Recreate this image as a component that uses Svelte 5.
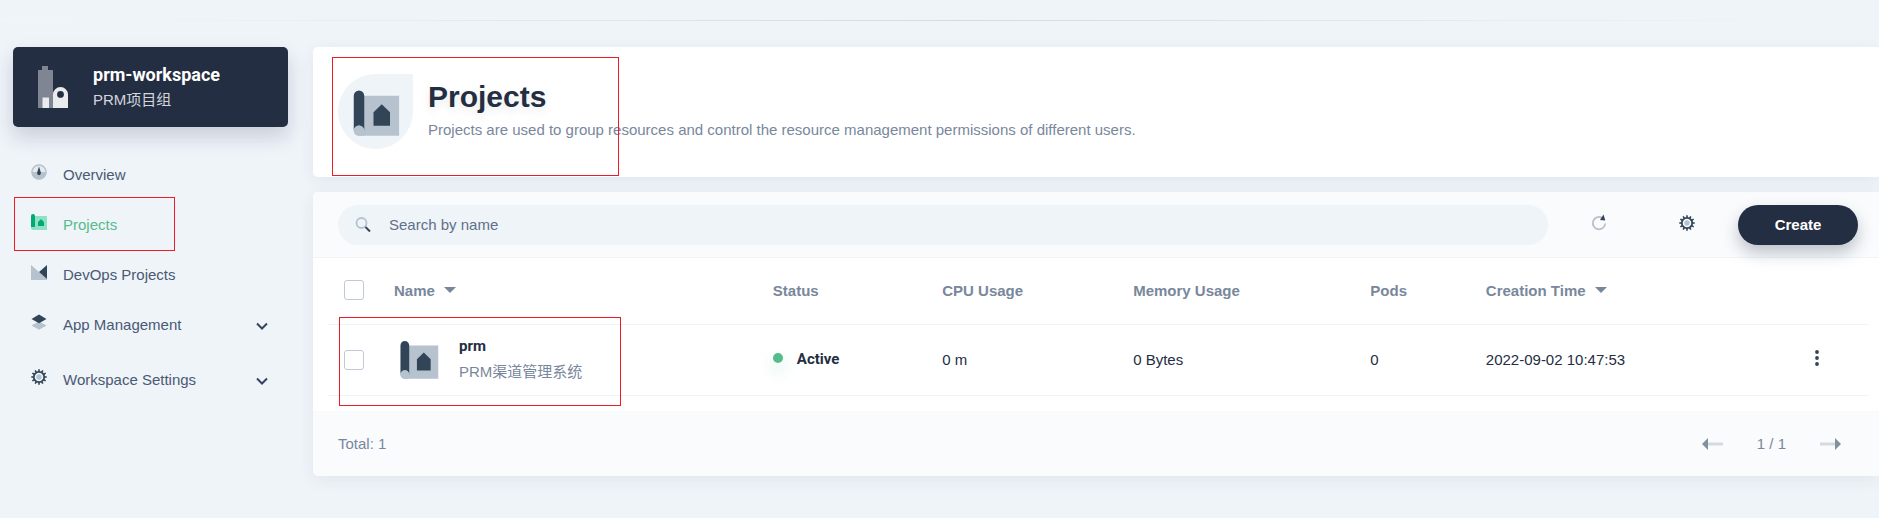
<script>
  const nav = [
    { icon: 'gauge', label: 'Overview' },
    { icon: 'project', label: 'Projects', active: true },
    { icon: 'devops', label: 'DevOps Projects' },
    { icon: 'layers', label: 'App Management', group: true },
    { icon: 'gear', label: 'Workspace Settings', group: true }
  ];
  const columns = [
    { key: 'name', title: 'Name', sort: true },
    { key: 'status', title: 'Status' },
    { key: 'cpu', title: 'CPU Usage' },
    { key: 'memory', title: 'Memory Usage' },
    { key: 'pods', title: 'Pods' },
    { key: 'created', title: 'Creation Time', sort: true }
  ];
  const projects = [
    { name: 'prm', alias: 'PRM渠道管理系统', status: 'Active', cpu: '0 m', memory: '0 Bytes', pods: '0', created: '2022-09-02 10:47:53' }
  ];
  let query = $state('');
  const teeth = Array.from({ length: 12 }, (_, i) => i * 30);
</script>

{#snippet projectIcon(size)}
  <svg width={size} height={size} viewBox="0 0 48 48" aria-hidden="true">
    <path class="light" d="M12 11h30.500v32H10.200a4 4 0 0 1-4-4z" />
    <path class="dark" d="M6.200 11a4.200 4.200 0 0 1 8.400 0v28a4.200 4.200 0 0 0-8.400 0z" />
    <path class="light" d="M6.200 39a4.200 4.200 0 0 1 8.400 0v4h-4.400a4 4 0 0 1-4-4z" />
    <path class="dark" d="M22 24.200l6.600-6.500 6.600 6.500V35H22z" />
  </svg>
{/snippet}

{#snippet gearIcon()}
  <svg width="20" height="20" viewBox="0 0 20 20" aria-hidden="true">
    {#each teeth as angle}
      <path class="dark" d="M9.200 2.300h1.600V5H9.200z" transform="rotate({angle} 10 10)" />
    {/each}
    <circle cx="10" cy="10" r="5.200" fill="none" stroke="#324558" stroke-width="1.800" />
    <circle class="light" cx="10" cy="10" r="2.700" />
  </svg>
{/snippet}

<div class="page">
  <div class="topline"></div>
  <div class="layout">
    <aside>
      <button class="workspace">
        <svg width="40" height="48" viewBox="0 0 40 48" aria-hidden="true">
          <path fill="#7f8593" d="M5 7h4V3h6v4h5v38H5z" />
          <path fill="#e9ebed" d="M9.500 34.500H16V45H9.500z" />
          <path fill="#e9ebed" fill-rule="evenodd" d="M20 31.500a7.500 7.500 0 0 1 15 0V45H20zM27.500 28a3.400 3.400 0 1 0 0 6.800a3.400 3.400 0 0 0 0-6.800z" />
        </svg>
        <span class="who"><strong>prm-workspace</strong><span>PRM项目组</span></span>
      </button>
      <nav>
        {#each nav as item}
          <a href="#{item.icon}" class:active={item.active} class:group={item.group}>
            {#if item.icon === 'gauge'}
              <svg width="20" height="20" viewBox="0 0 20 20" aria-hidden="true">
                <circle cx="10" cy="10" r="7" fill="#e4eaf0" stroke="#b6c2cd" stroke-width="1.500" />
                <path class="light" d="M2.500 10h15a7.500 7.500 0 0 1-15 0z" />
                <path class="dark" d="m10 4.500 1.700 5.500a2 2 0 1 1-3.400 0z" />
              </svg>
            {:else if item.icon === 'project'}
              <svg class="green" width="20" height="20" viewBox="0 0 20 20" aria-hidden="true">
                <path class="light" d="M4 4h14v14H4a2 2 0 0 1-2-2z" />
                <path class="dark" d="M2 4a2 2 0 0 1 4 0v11H2zM9 10l3-3 3 3v4H9z" />
              </svg>
            {:else if item.icon === 'devops'}
              <svg width="20" height="20" viewBox="0 0 20 20" aria-hidden="true">
                <path class="light" d="M2 3l8 7 8 7v1H2z" />
                <path class="dark" d="M18 3v14l-8-7z" />
              </svg>
            {:else if item.icon === 'layers'}
              <svg width="20" height="20" viewBox="0 0 20 20" aria-hidden="true">
                <path class="light" d="m2.500 13.500 7.500-4 7.500 4-7.500 4.300z" />
                <path class="dark" d="m2.500 7 7.500-4.500L17.500 7 10 11.300z" />
              </svg>
            {:else}
              {@render gearIcon()}
            {/if}
            <span>{item.label}</span>
            {#if item.group}
              <svg class="chevron" width="20" height="20" viewBox="0 0 20 20" aria-hidden="true">
                <path d="m5 7.500 5 5 5-5" fill="none" stroke="#36435c" stroke-width="2" />
              </svg>
            {/if}
            {#if item.active}<i class="mark"></i>{/if}
          </a>
        {/each}
      </nav>
    </aside>

    <main>
      <header class="banner">
        <div class="badge">{@render projectIcon(60)}</div>
        <div>
          <h1>Projects</h1>
          <p>Projects are used to group resources and control the resource management permissions of different users.</p>
        </div>
        <i class="mark"></i>
      </header>

      <section>
        <div class="toolbar">
          <label class="search">
            <svg width="20" height="20" viewBox="0 0 20 20" aria-hidden="true">
              <circle cx="8.500" cy="8" r="5" fill="none" stroke="#b6c2cd" stroke-width="1.800" />
              <path d="m12.500 12 4.500 4.500" stroke="#324558" stroke-width="2" />
            </svg>
            <input type="text" placeholder="Search by name" aria-label="Search by name" bind:value={query} />
          </label>
          <button class="tool" aria-label="Refresh">
            <svg width="20" height="20" viewBox="0 0 20 20" aria-hidden="true">
              <path d="M13 4.700A6.200 6.200 0 1 0 16.200 10.500" fill="none" stroke="#b6c2cd" stroke-width="1.800" />
              <path class="dark" d="m14.500 1.500 1.800 6-5.300-.5z" />
            </svg>
          </button>
          <button class="tool" aria-label="Columns">{@render gearIcon()}</button>
          <button class="create">Create</button>
        </div>

        <div class="tablewrap">
          <table>
            <colgroup>
              <col class="pick" /><col class="name" /><col class="status" /><col class="cpu" />
              <col class="memory" /><col class="pods" /><col class="created" /><col class="more" />
            </colgroup>
            <thead>
              <tr>
                <th><input type="checkbox" aria-label="Select all" /></th>
                {#each columns as column}
                  <th>
                    {column.title}
                    {#if column.sort}<i class="caret"></i>{/if}
                  </th>
                {/each}
                <th></th>
              </tr>
            </thead>
            <tbody>
              {#each projects as project}
                <tr>
                  <td><input type="checkbox" aria-label="Select {project.name}" /><i class="mark"></i></td>
                  <td>
                    <div class="entry">
                      {@render projectIcon(50)}
                      <div><strong>{project.name}</strong><span>{project.alias}</span></div>
                    </div>
                  </td>
                  <td><span class="state"><i></i>{project.status}</span></td>
                  <td>{project.cpu}</td>
                  <td>{project.memory}</td>
                  <td>{project.pods}</td>
                  <td>{project.created}</td>
                  <td>
                    <button class="tool" aria-label="More">
                      <svg width="20" height="20" viewBox="0 0 20 20" aria-hidden="true">
                        <circle class="dark" cx="10" cy="4" r="1.900" /><circle class="dark" cx="10" cy="10" r="1.900" /><circle class="dark" cx="10" cy="16" r="1.900" />
                      </svg>
                    </button>
                  </td>
                </tr>
              {/each}
            </tbody>
          </table>
        </div>

        <footer>
          <span>Total: 1</span>
          <div class="pager">
            <button class="tool" aria-label="Previous page">
              <svg width="21" height="20" viewBox="0 0 21 20" aria-hidden="true"><path d="M6 10h15" stroke="#d3dae0" stroke-width="3" /><path fill="#84909c" d="m0 10 6-6v12z" /></svg>
            </button>
            <span>1 / 1</span>
            <button class="tool" aria-label="Next page">
              <svg width="21" height="20" viewBox="0 0 21 20" aria-hidden="true"><path d="M0 10h15" stroke="#d3dae0" stroke-width="3" /><path fill="#84909c" d="m21 10-6-6v12z" /></svg>
            </button>
          </div>
        </footer>
      </section>
    </main>
  </div>
</div>

<style>
  :global(body) { background: #eff4f9; overflow-x: hidden; }
  * { box-sizing: border-box; }
  .page { font: 15px/25px "Liberation Sans", Arial, "Noto Sans CJK SC", sans-serif; color: #242e42; padding-top: 20px; }
  button { font: inherit; border: 0; background: none; padding: 0; cursor: pointer; }
  svg { display: block; flex: none; }
  .dark { fill: #324558; }
  .light { fill: #b6c2cd; }
  .green .dark { fill: #00aa72; }
  .green .light { fill: #90e0c5; }
  .topline { height: 1px; background: linear-gradient(to right, #f2f6fa, #eff4f9 6%, #d5dbe1 51%, #eff4f9 96%); }
  .layout { display: flex; gap: 25px; padding: 26px 0 42px 13px; }
  aside { width: 275px; flex: none; }
  main { flex: 1; min-width: 0; }

  .workspace { display: flex; align-items: center; gap: 20px; width: 100%; height: 80px; padding: 0 20px; border-radius: 5px; background: #242e42; box-shadow: 0 10px 20px rgba(35, 35, 75, 0.18); text-align: left; }
  .who { display: flex; flex-direction: column; color: #d2d6de; }
  .who strong { font: bold 18px/25px Roboto, sans-serif; color: #fff; }
  nav { padding-top: 22px; }
  nav a { position: relative; display: flex; align-items: center; gap: 14px; height: 50px; padding: 0 16px; color: #4a5974; text-decoration: none; }
  nav .group + .group { margin-top: 5px; }
  nav svg { margin-bottom: 4px; }
  nav .chevron { margin: 4px 0 0 auto; }
  nav a.active { color: #55bc8a; }
  .mark { position: absolute; border: 1px solid #ed1c24; pointer-events: none; }
  nav .mark { left: 1px; top: -2px; width: 161px; height: 54px; }

  .banner { position: relative; display: flex; gap: 15px; height: 130px; padding: 27px 25px; border-radius: 5px 0 0 5px; background: #fff; box-shadow: 0 4px 16px rgba(39, 50, 71, 0.07); }
  .badge { display: grid; place-items: center; width: 75px; height: 75px; border-radius: 50% 0 50% 50%; background: #eff4f9; }
  h1 { margin: 3px 0 0; font-size: 30px; line-height: 40px; text-shadow: 0 4px 8px rgba(36, 46, 66, 0.1); }
  p { margin: 0; color: #79879c; }
  .banner .mark { left: 19px; top: 10px; width: 287px; height: 119px; }

  section { margin-top: 15px; border-radius: 5px 0 0 5px; background: #fff; box-shadow: 0 4px 16px rgba(39, 50, 71, 0.07); }
  .toolbar { display: flex; align-items: center; height: 66px; padding: 0 21px 0 25px; border-bottom: 1px solid #eff4f9; border-radius: 5px 0 0; background: #f9fbfd; }
  .search { display: flex; flex: 1; align-items: center; gap: 16px; height: 40px; padding: 0 15px; border-radius: 20px; background: #eff4f9; }
  .search input { flex: 1; border: 0; padding: 0; outline: 0; background: none; font: inherit; color: #242e42; }
  .search input::placeholder { color: #5f708a; opacity: 1; }
  .tool { display: grid; place-items: center; height: 40px; }
  .toolbar .tool { width: 88px; padding-bottom: 4px; }
  .search + .tool { margin-left: 7px; }
  .create { width: 120px; height: 40px; margin-left: 7px; border-radius: 20px; background: #242e42; color: #fff; font-weight: bold; box-shadow: 0 8px 16px rgba(35, 45, 65, 0.28); }

  .tablewrap { padding: 0 11px 15px 15px; }
  table { width: 100%; table-layout: fixed; border-collapse: separate; border-spacing: 0; }
  .pick { width: 51px; }
  .name { width: 24.6%; }
  .status { width: 11%; }
  .cpu { width: 12.4%; }
  .memory { width: 15.4%; }
  .pods { width: 7.5%; }
  .more { width: 102px; }
  th, td { position: relative; padding: 0 15px 2px; border-bottom: 1px solid #eff4f9; text-align: left; }
  th:first-child, td:first-child { padding: 0 0 0 16px; }
  th:first-child { padding-bottom: 2px; }
  th { height: 67px; color: #79879c; }
  td { height: 71px; }
  input[type='checkbox'] { appearance: none; display: block; width: 20px; height: 20px; margin: 0; border: 1px solid #c1c9d6; border-radius: 3px; background: #fff; }
  td .mark { left: 11px; top: -8px; width: 282px; height: 89px; z-index: 1; }
  .caret { display: inline-block; margin: 0 0 3px 5px; border: 6px solid transparent; border-top-color: #79879c; border-bottom: 0; }
  .entry { display: flex; align-items: center; gap: 15px; }
  .entry strong, .entry span { display: block; }
  .entry strong { font-family: Roboto, sans-serif; }
  .entry span { color: #79879c; }
  .state { display: flex; align-items: center; gap: 14px; font: bold 15px/25px Roboto, sans-serif; }
  .state i { width: 10px; height: 10px; margin-bottom: 3px; border-radius: 50%; background: #55bc8a; box-shadow: 0 8px 16px rgba(85, 188, 138, 0.36); }
  td .tool { width: 100%; padding-bottom: 2px; }

  footer { display: flex; align-items: center; justify-content: space-between; height: 65px; padding: 0 38px 0 25px; border-radius: 0 0 0 5px; background: #f9fbfd; color: #79879c; }
  .pager { display: flex; align-items: center; gap: 34px; }
</style>
